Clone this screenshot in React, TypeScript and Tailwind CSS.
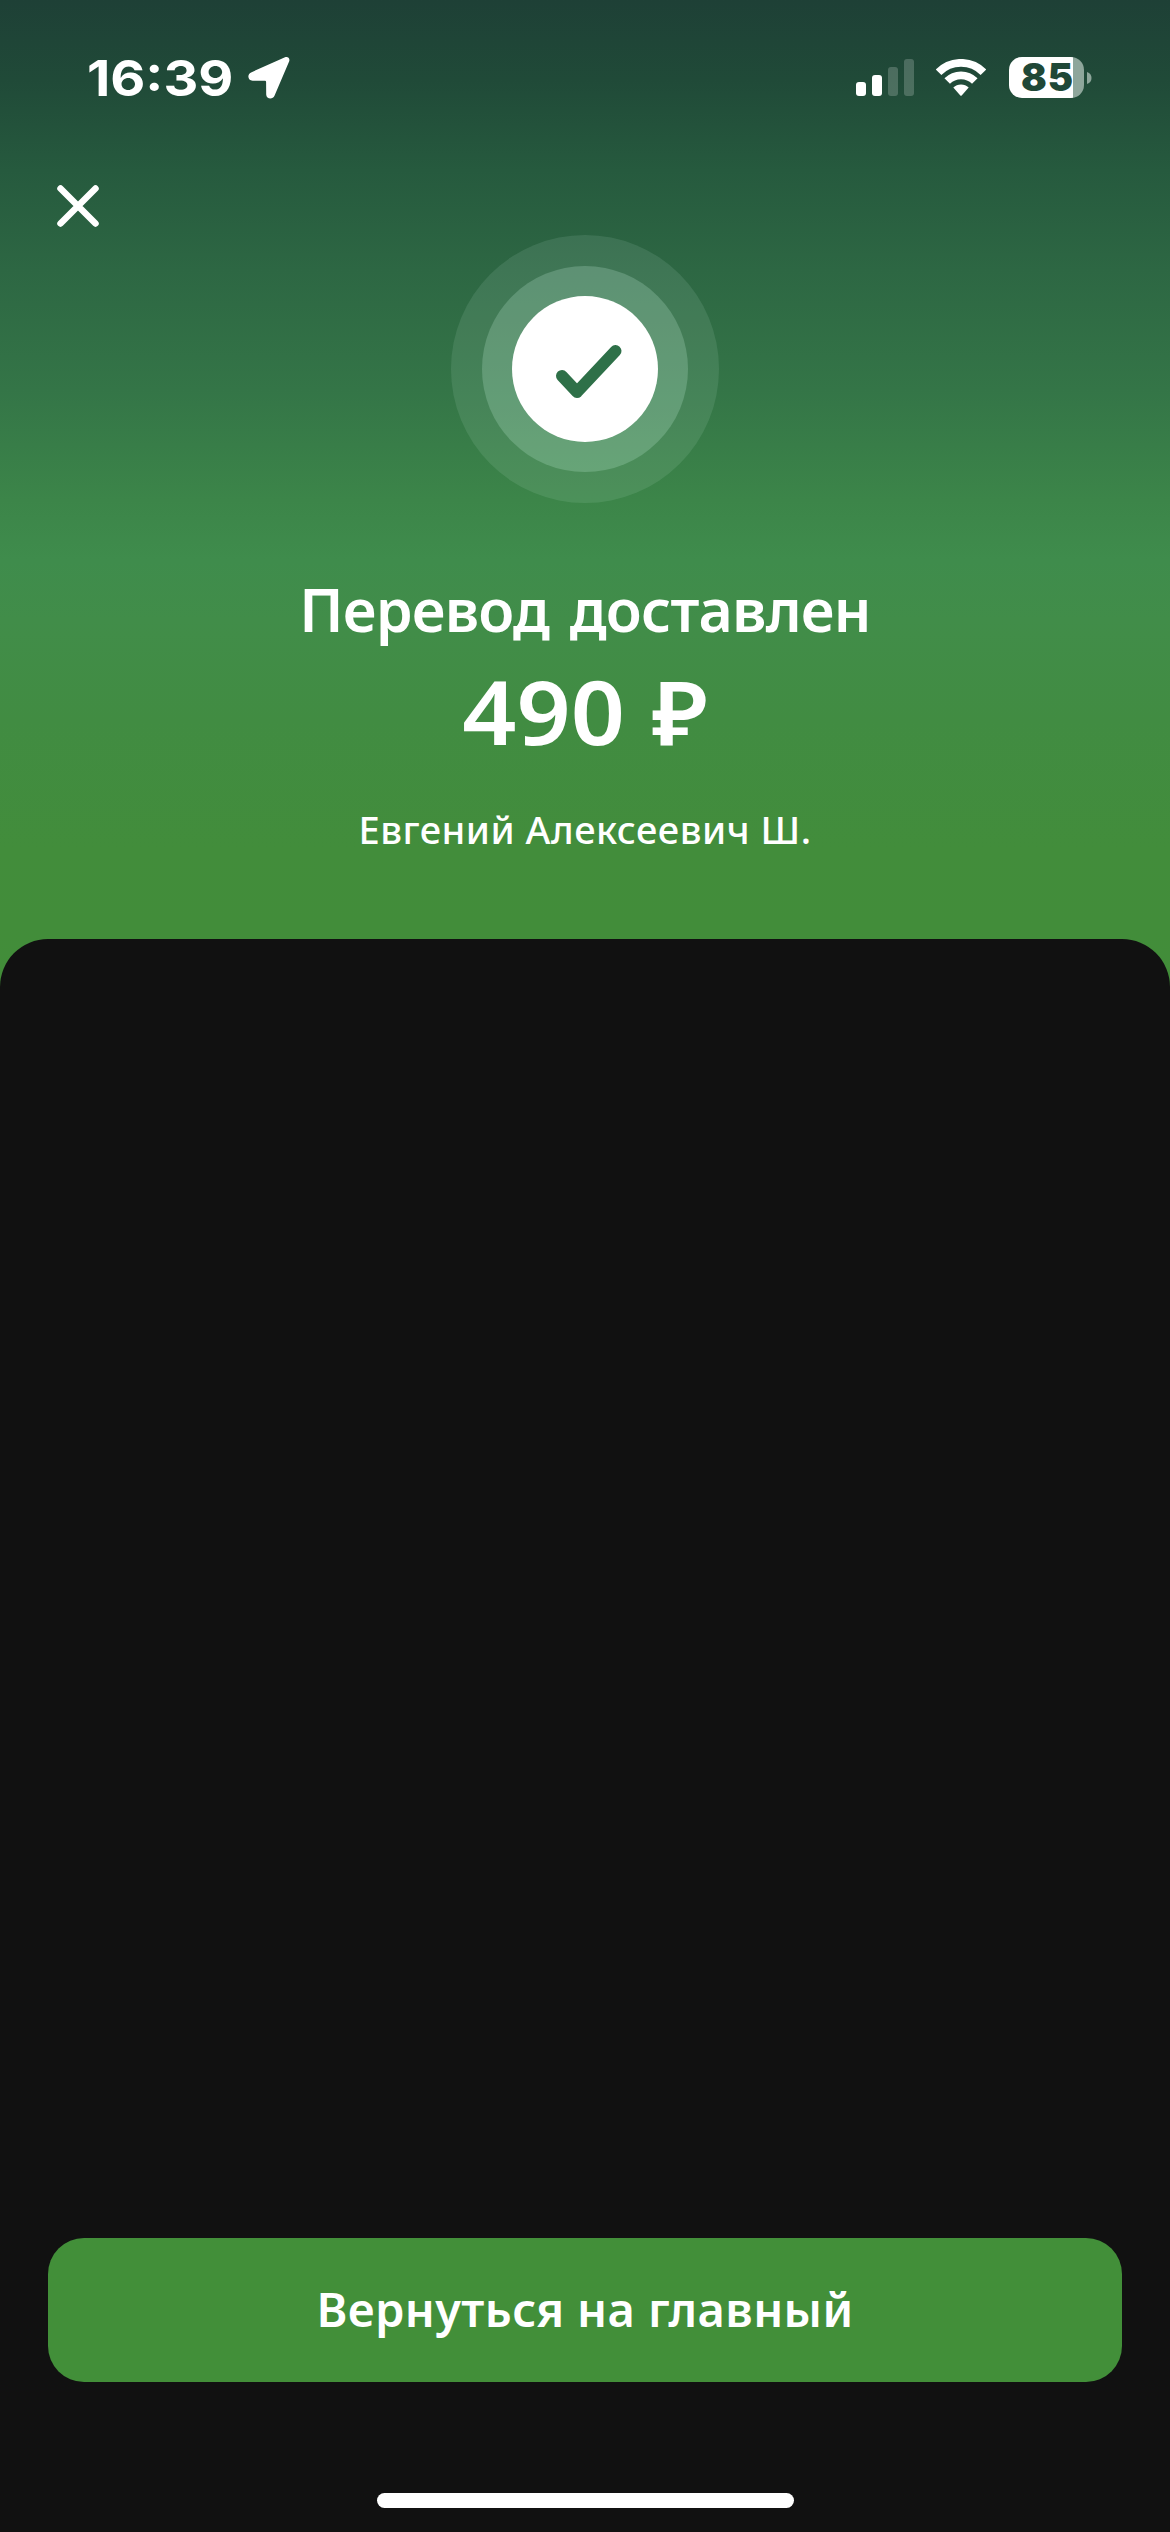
import React from 'react';

const SIGNAL_BARS = [
  { x: 0, y: 23, height: 14, active: true },
  { x: 16, y: 16, height: 21, active: true },
  { x: 32, y: 8, height: 29, active: false },
  { x: 48, y: 0, height: 37, active: false },
];

function SignalIcon() {
  return (
    <svg width="58" height="37" viewBox="0 0 58 37">
      {SIGNAL_BARS.map(bar => (
        <rect
          key={bar.x}
          x={bar.x}
          y={bar.y}
          width="10"
          height={bar.height}
          rx="3"
          fill="#fff"
          fillOpacity={bar.active ? 1 : 0.2}
        />
      ))}
    </svg>
  );
}

function WifiIcon() {
  return (
    <svg width="50" height="37" viewBox="0 0 50 37" fill="none">
      <path d="M2.6 13.2A31.5 31.5 0 0 1 47.4 13.2" stroke="#fff" strokeWidth="7.8" />
      <path d="M11.2 22A19.5 19.5 0 0 1 38.8 22" stroke="#fff" strokeWidth="7.8" />
      <path d="M17.3 28.6A11 11 0 0 1 32.7 28.6L25.9 36.2Q25 37.2 24.1 36.2Z" fill="#fff" />
    </svg>
  );
}

function LocationIcon() {
  return (
    <svg width="42" height="42" viewBox="0 0 42 42">
      <path
        d="M37 .3C40 -.7 42.300 1.600 41.100 4.600L26.500 38.800C24.600 43.100 18.200 42 18.200 37.400L18.100 24.900Q18.100 23.800 17 23.800L4.600 23.700C-.100 23.700 -1.300 17.400 3.100 15.400Z"
        fill="#fff"
      />
    </svg>
  );
}

function Battery({ level }: { level: number }) {
  return (
    <div className="flex items-center">
      <div
        className="flex h-[41px] w-[75px] items-center justify-center rounded-[13px] pl-[2px] text-[38px] leading-[41px] font-black tracking-[1px] text-[#204837]"
        style={{ background: `linear-gradient(90deg, #fff ${level}%, #8ea69b ${level}%)` }}
      >
        {level}
      </div>
      <svg className="ml-[3px]" width="5" height="12" viewBox="0 0 5 12">
        <path d="M0 0C6 1.500 6 10.500 0 12Z" fill="#8ea69b" />
      </svg>
    </div>
  );
}

function StatusBar() {
  return (
    <div className="flex h-[156px] items-start justify-between pt-[57px] pr-[78px] pl-[87px] font-['Inter',sans-serif]">
      <div className="flex items-center">
        <div className="flex w-[161px]">
          <span className="origin-left scale-x-[1.08] text-[50px] leading-[42px] font-bold whitespace-nowrap">
            16:39
          </span>
        </div>
        <LocationIcon />
      </div>
      <div className="flex items-center">
        <SignalIcon />
        <div className="mr-[23px] ml-[22px]">
          <WifiIcon />
        </div>
        <Battery level={85} />
      </div>
    </div>
  );
}

function SuccessBadge() {
  return (
    <div className="flex size-[268px] items-center justify-center rounded-full bg-[#e4fff4]/10">
      <div className="flex size-[206px] items-center justify-center rounded-full bg-[#d8ffee]/20">
        <div className="flex size-[146px] items-center justify-center rounded-full bg-white">
          <svg width="146" height="146" viewBox="0 0 146 146" fill="none">
            <path
              d="M50 80L65 96L103.500 55"
              stroke="#2e7048"
              strokeWidth="12"
              strokeLinecap="round"
              strokeLinejoin="round"
            />
          </svg>
        </div>
      </div>
    </div>
  );
}

export default function App() {
  return (
    <div className="flex h-[2532px] w-[1170px] flex-col bg-[linear-gradient(180deg,#1e4036_0px,#204a38_80px,#265a3e_170px,#2d6743_270px,#347547_390px,#3c8549_500px,#3f8c4c_560px,#418d49_620px,#418c42_720px,#428d3b_850px,#428d39_1000px)] font-['Noto_Sans',sans-serif] text-white">
      <StatusBar />

      <header className="relative flex h-[783px] flex-col items-center pt-[79px]">
        <button type="button" aria-label="Закрыть" className="absolute top-[28px] left-[56px]">
          <svg width="44" height="44" viewBox="0 0 44 44" fill="none">
            <path d="M4.500 4.500L39.500 39.500M39.500 4.500L4.500 39.500" stroke="#fff" strokeWidth="6.500" strokeLinecap="round" />
          </svg>
        </button>

        <SuccessBadge />

        <h1 className="mt-[66px] text-[59px] leading-[80px] font-semibold tracking-[-0.8px] whitespace-nowrap [word-spacing:6px]">
          Перевод доставлен
        </h1>
        <p className="mt-[7px] scale-x-[1.077] text-[88px] leading-[110px] font-semibold whitespace-nowrap [word-spacing:2px]">
          490 ₽
        </p>
        <p className="mt-[37px] text-[38px] leading-[52px] font-medium tracking-[0.5px] whitespace-nowrap">
          Евгений Алексеевич Ш.
        </p>
      </header>

      <main className="flex flex-1 flex-col items-center justify-end rounded-t-[48px] bg-[#111] px-[48px] pb-[24px]">
        <button
          type="button"
          className="h-[144px] w-full rounded-[36px] bg-[#428f39] pb-[2px] text-[47px] font-semibold tracking-[0.4px] whitespace-nowrap"
        >
          Вернуться на главный
        </button>
        {/* Home indicator */}
        <div className="mt-[111px] h-[15px] w-[417px] rounded-full bg-white" />
      </main>
    </div>
  );
}
